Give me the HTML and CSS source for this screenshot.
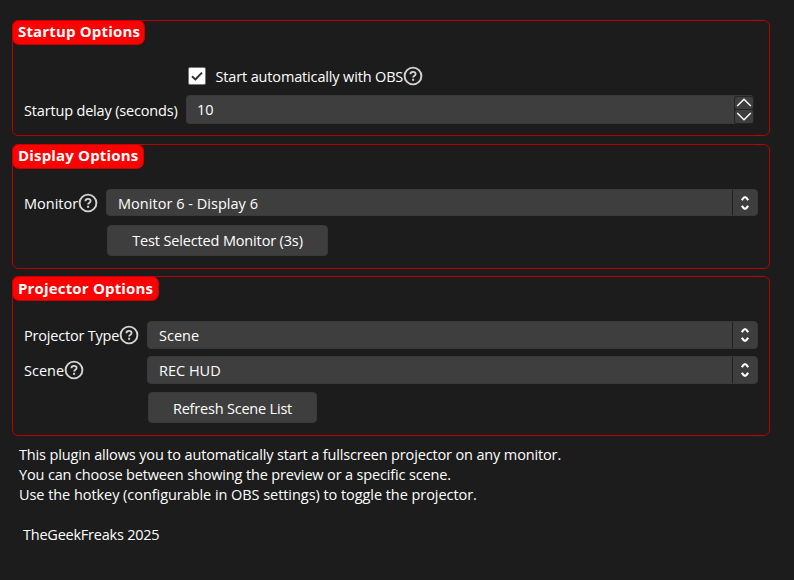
FILE: index.html
```html
<!DOCTYPE html>
<html lang="en">
<head>
<meta charset="utf-8">
<title>Projector settings</title>
<link rel="stylesheet" href="styles.css">
</head>
<body>
<svg width="0" height="0" class="defs">
  <symbol id="help" viewBox="0 0 20 20"><circle cx="10" cy="10" r="8.4" fill="none" stroke="#d4d4d4" stroke-width="1.9"/><path d="M7.4 8.2C7.4 6.6 8.5 5.8 10 5.8s2.6.9 2.6 2.2c0 1.6-2.5 1.8-2.5 3.6" fill="none" stroke="#d4d4d4" stroke-width="1.8"/><rect x="9.1" y="12.8" width="2" height="2" fill="#d4d4d4"/></symbol>
  <symbol id="sort" viewBox="0 0 10 18"><path d="M1.9 6.2Q3.5 3.2 5 3.2T8.1 6.2M1.9 11.8Q3.5 14.8 5 14.8T8.1 11.8" fill="none" stroke="#fff" stroke-width="2.2"/></symbol>
</svg>
<main>
  <section class="group startup">
    <h2><span>Startup Options</span></h2>
    <div class="check-row">
      <span class="checkbox"><svg width="16" height="16" viewBox="0 0 16 16"><path d="M3 8.2 6.4 11.4 13 4.6" fill="none" stroke="#2c2c2c" stroke-width="1.9"/></svg></span>
      <span class="check-label">Start automatically with OBS</span><svg class="help"><use href="#help"/></svg>
    </div>
    <div class="row">
      <label><span class="t-delay">Startup delay (seconds)</span></label>
      <div class="spin"><span class="value">10</span>
        <div class="steps">
          <span><svg width="16" height="11" viewBox="0 0 16 11"><path d="M1.2 9 8 2.2 14.8 9" fill="none" stroke="#fff" stroke-width="1.4"/></svg></span>
          <span><svg width="16" height="11" viewBox="0 0 16 11"><path d="M1.2 2 8 8.8 14.8 2" fill="none" stroke="#fff" stroke-width="1.4"/></svg></span>
        </div>
      </div>
    </div>
  </section>
  <section class="group display">
    <h2><span>Display Options</span></h2>
    <div class="row">
      <label><span class="t-monitor">Monitor</span><svg class="help"><use href="#help"/></svg></label>
      <div class="select"><span class="value t-mon6">Monitor 6 - Display 6</span><span class="arrow"><svg width="10" height="18"><use href="#sort"/></svg></span></div>
    </div>
    <button><span class="t-test">Test Selected Monitor (3s)</span></button>
  </section>
  <section class="group projector">
    <h2><span>Projector Options</span></h2>
    <div class="row">
      <label><span class="t-type">Projector Type</span><svg class="help"><use href="#help"/></svg></label>
      <div class="select"><span class="value">Scene</span><span class="arrow"><svg width="10" height="18"><use href="#sort"/></svg></span></div>
    </div>
    <div class="row">
      <label><span>Scene</span><svg class="help"><use href="#help"/></svg></label>
      <div class="select"><span class="value">REC HUD</span><span class="arrow"><svg width="10" height="18"><use href="#sort"/></svg></span></div>
    </div>
    <button><span class="t-refresh">Refresh Scene List</span></button>
  </section>
  <div class="info">
    <p class="i1">This plugin allows you to automatically start a fullscreen projector on any monitor.</p>
    <p class="i2">You can choose between showing the preview or a specific scene.</p>
    <p class="i3">Use the hotkey (configurable in OBS settings) to toggle the projector.</p>
  </div>
  <p class="credit">TheGeekFreaks 2025</p>
</main>
</body>
</html>
```
FILE: styles.css
```css
* { box-sizing: border-box; }
body { margin: 0; background: #1c1c1c; color: #fff; font: 14.5px/20px "Open Sans", sans-serif; overflow: hidden; }
.defs { display: block; }
main { width: 794px; height: 580px; padding: 20px 24px 0 12px; white-space: nowrap; }
p, h2 { margin: 0; }
.group { border: 1px solid #b80000; border-radius: 6px; margin-bottom: 8px; padding-right: 11px; }
.startup { height: 116px; --label: 162px; }
.display { height: 125px; margin-bottom: 7px; --label: 82px; }
.projector { height: 160px; --label: 123px; }
h2 { height: 25px; margin: -1px 0 0 -1px; padding-left: 5px; border: 1px solid #c90000; border-radius: 7px; background: #f00; font-size: 15px; line-height: 22px; font-weight: 700; letter-spacing: .17px; box-shadow: 1px 1px 0 #1c1c1c; }
.startup h2, .display h2 { line-height: 20px; }
.startup h2 { width: 133px; }
.display h2 { width: 132px; }
.projector h2 { width: 147px; }
.check-row { display: flex; align-items: center; height: 20px; margin: 21px 0 0 175px; }
.checkbox { width: 18px; height: 18px; border: 1px solid #777; border-radius: 2px; background: #fff; }
.checkbox svg, .steps svg, .arrow svg { display: block; }
.check-label { margin-left: 9.5px; padding-top: 1px; letter-spacing: -.15px; }
.help { width: 20px; height: 20px; flex: none; }
.row { display: flex; align-items: center; }
.row label { display: flex; align-items: center; width: var(--label); padding-left: 11px; margin-right: 11px; flex: none; }
.startup .row { height: 29px; margin-top: 9px; padding-right: 4px; }
.startup .row label { padding-top: 3px; }
.display .row { height: 27px; margin-top: 20px; }
.projector .row { height: 28px; margin-top: 20px; }
.projector .row + .row { margin-top: 7px; }
.display label span, .display .value, .projector label span, .projector .value { padding-top: 2px; }
.spin, .select { display: flex; flex: 1; height: 100%; align-items: center; background: #3e3e3e; border: 1px solid #393939; border-radius: 4px; }
.spin { border-right: 0; }
.value { margin-left: 11px; }
.spin .value { margin-left: 10px; }
.steps { display: grid; gap: 1px; width: 20px; margin: 0 0 0 auto; padding: 1px; background: #242424; border-radius: 3px; }
.steps span { display: grid; place-items: center; height: 12.5px; background: #3e3e3e; border-radius: 2px; }
.arrow { display: grid; place-items: center; height: 100%; width: 25px; margin-left: auto; border-left: 1px solid #202020; }
button { display: block; color: #fff; font: inherit; background: #3e3e3e; border: 1px solid #393939; border-radius: 4px; padding: 0; }
.display button { width: 221px; height: 31px; margin: 9px 0 0 94px; }
.projector button { width: 169px; height: 31px; margin: 8px 0 0 135px; padding-top: 2px; }
.t-delay { letter-spacing: -.17px; }
.t-mon6 { letter-spacing: .03px; }
.t-test { letter-spacing: -.15px; }
.t-type { letter-spacing: -.2px; }
.t-refresh { letter-spacing: -.2px; }
.i1 { letter-spacing: -.14px; }
.i2 { letter-spacing: -.15px; }
.i3 { letter-spacing: -.055px; }
.info { padding: 1px 0 0 7px; }
.credit { margin: 20px 0 0 11px; letter-spacing: -.23px; }
```
